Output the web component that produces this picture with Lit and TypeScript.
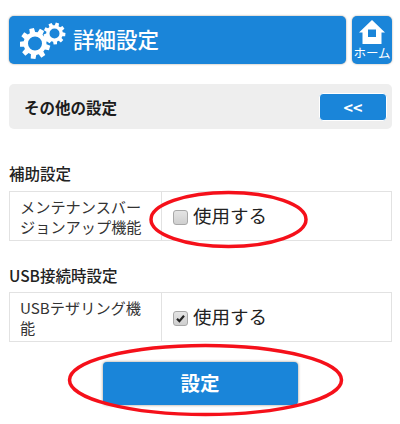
import { LitElement, html, css, svg } from "lit";
import { customElement } from "lit/decorators.js";

function gear(cx: number, cy: number, rOut: number, rIn: number, hole: number, teeth: number, rot = 0) {
  let d = "";
  const step = (Math.PI * 2) / teeth;
  for (let i = 0; i < teeth; i++) {
    const a = rot + i * step;
    const pts: [number, number][] = [
      [rIn, a - step * 0.34],
      [rOut, a - step * 0.22],
      [rOut, a + step * 0.22],
      [rIn, a + step * 0.34],
    ];
    for (const [r, t] of pts) {
      d += `${d ? "L" : "M"}${(cx + r * Math.cos(t)).toFixed(2)} ${(cy + r * Math.sin(t)).toFixed(2)}`;
    }
  }
  d += `Z M${cx - hole} ${cy}a${hole} ${hole} 0 1 0 ${hole * 2} 0a${hole} ${hole} 0 1 0 ${-hole * 2} 0Z`;
  return d;
}

@customElement("app-root")
export class AppRoot extends LitElement {
  static styles = css`
    :host {
      display: block;
      position: relative;
      width: 400px;
      height: 424px;
      background: #fff;
      overflow: hidden;
      font-family: "Noto Sans CJK JP", "Noto Sans", sans-serif;
      color: #222;
    }
    .page {
      display: flex;
      flex-direction: column;
      padding: 16px 8px 0 9px;
    }
    .top {
      display: flex;
      gap: 6px;
      height: 48px;
    }
    .title {
      flex: 1;
      display: flex;
      align-items: center;
      gap: 7px;
      padding-left: 11px;
      background: #1a85d9;
      border-radius: 5px;
      box-shadow: 0 0 2px rgba(90, 70, 50, 0.6);
      color: #fff;
      font-size: 21.5px;
      font-weight: 500;
    }
    .title svg {
      flex: none;
    }
    .title span {
      margin-top: -3px;
    }
    .home {
      width: 40px;
      flex: none;
      display: flex;
      flex-direction: column;
      align-items: center;
      background: #1a85d9;
      border-radius: 5px;
      box-shadow: 0 0 2px rgba(90, 70, 50, 0.5);
      color: #fff;
      font-size: 12.5px;
      line-height: 14px;
      padding-top: 4px;
      box-sizing: border-box;
      white-space: nowrap;
    }
    .home svg {
      display: block;
      margin-bottom: 1px;
    }
    .panel {
      margin-top: 20px;
      height: 45px;
      display: flex;
      align-items: center;
      justify-content: space-between;
      padding: 0 5px 0 15px;
      background: #eee;
      border-radius: 5px;
      font-size: 15.5px;
      font-weight: 700;
      color: #1c1c1c;
    }
    .back {
      width: 68px;
      height: 28px;
      display: flex;
      align-items: center;
      justify-content: center;
      background: #1a85d9;
      border: 1px solid #fff;
      box-sizing: border-box;
      border-radius: 4px;
      color: #fff;
      font-size: 16px;
      font-weight: 700;
      line-height: 1;
    }
    h2 {
      margin: 0;
      font-size: 15.5px;
      font-weight: 500;
      line-height: 22px;
      color: #222;
    }
    h2.first {
      margin-top: 33px;
    }
    h2.second {
      margin-top: 23px;
    }
    .row {
      margin-top: 7px;
      height: 50px;
      display: grid;
      grid-template-columns: 152px 1fr;
      border: 1px solid #e2e2e2;
      box-sizing: border-box;
    }
    h2.second + .row {
      margin-top: 6px;
    }
    .label {
      border-right: 1px solid #e2e2e2;
      padding: 0 6px 0 10px;
      display: flex;
      align-items: center;
      font-size: 15.2px;
      line-height: 20px;
      color: #333;
    }
    .opt {
      display: flex;
      align-items: center;
      padding-left: 11px;
      gap: 5px;
      font-size: 18.5px;
      color: #222;
    }
    .opt span {
      line-height: 24px;
      margin-top: -3px;
    }
    .box {
      width: 13px;
      height: 13px;
      flex: none;
      border: 1px solid #a8a8a8;
      border-radius: 3px;
      background: linear-gradient(#e4e4e4, #cfcfcf);
      display: flex;
      align-items: center;
      justify-content: center;
      margin-top: 3px;
    }
    .submit-wrap {
      display: flex;
      justify-content: center;
      margin-top: 20px;
      padding-right: 1px;
    }
    .submit {
      width: 195px;
      height: 43px;
      display: flex;
      align-items: center;
      justify-content: center;
      background: #1a85d9;
      border-radius: 4px;
      box-shadow: 0 0 3px rgba(90, 70, 50, 0.6);
      color: #fff;
      font-size: 19.5px;
      font-weight: 700;
    }
    .submit span {
      margin-top: -3px;
    }
    .marks {
      position: absolute;
      left: 0;
      top: 0;
      pointer-events: none;
    }
  `;

  render() {
    return html`
      <div class="page">
        <div class="top">
          <div class="title">
            <svg width="46" height="38" viewBox="0 0 46 38" fill="#fff">
              <path fill-rule="evenodd" d=${gear(15, 22.5, 15.5, 11.5, 7, 9, 0.3)}></path>
              <path fill-rule="evenodd" d=${gear(34.5, 12.5, 11, 8.3, 5, 9, 0.1)}></path>
            </svg>
            <span>詳細設定</span>
          </div>
          <div class="home">
            <svg width="28" height="25" viewBox="0 0 28 25" fill="#fff">
              <path fill-rule="evenodd" d="M14 0L27 12.5H23.5V24H4.5V12.5H1ZM10 9.5V17H18V9.5Z"></path>
            </svg>
            <span>ホーム</span>
          </div>
        </div>
        <div class="panel">
          <span>その他の設定</span>
          <div class="back">&lt;&lt;</div>
        </div>
        <h2 class="first">補助設定</h2>
        <div class="row">
          <div class="label">メンテナンスバージョンアップ機能</div>
          <div class="opt"><div class="box"></div><span>使用する</span></div>
        </div>
        <h2 class="second">USB接続時設定</h2>
        <div class="row">
          <div class="label">USBテザリング機能</div>
          <div class="opt">
            <div class="box">
              <svg width="11" height="11" viewBox="0 0 11 11">
                <path d="M2 5.8L4.4 8.2L9 2.8" fill="none" stroke="#222" stroke-width="2.2"></path>
              </svg>
            </div>
            <span>使用する</span>
          </div>
        </div>
        <div class="submit-wrap"><div class="submit"><span>設定</span></div></div>
      </div>
      <svg class="marks" width="400" height="424" viewBox="0 0 400 424" fill="none" stroke="#f5101a" stroke-width="3.5">
        ${svg`<ellipse cx="228.5" cy="219.5" rx="77.5" ry="27"></ellipse>
        <ellipse cx="205.5" cy="380" rx="136" ry="34.5"></ellipse>`}
      </svg>
    `;
  }
}
